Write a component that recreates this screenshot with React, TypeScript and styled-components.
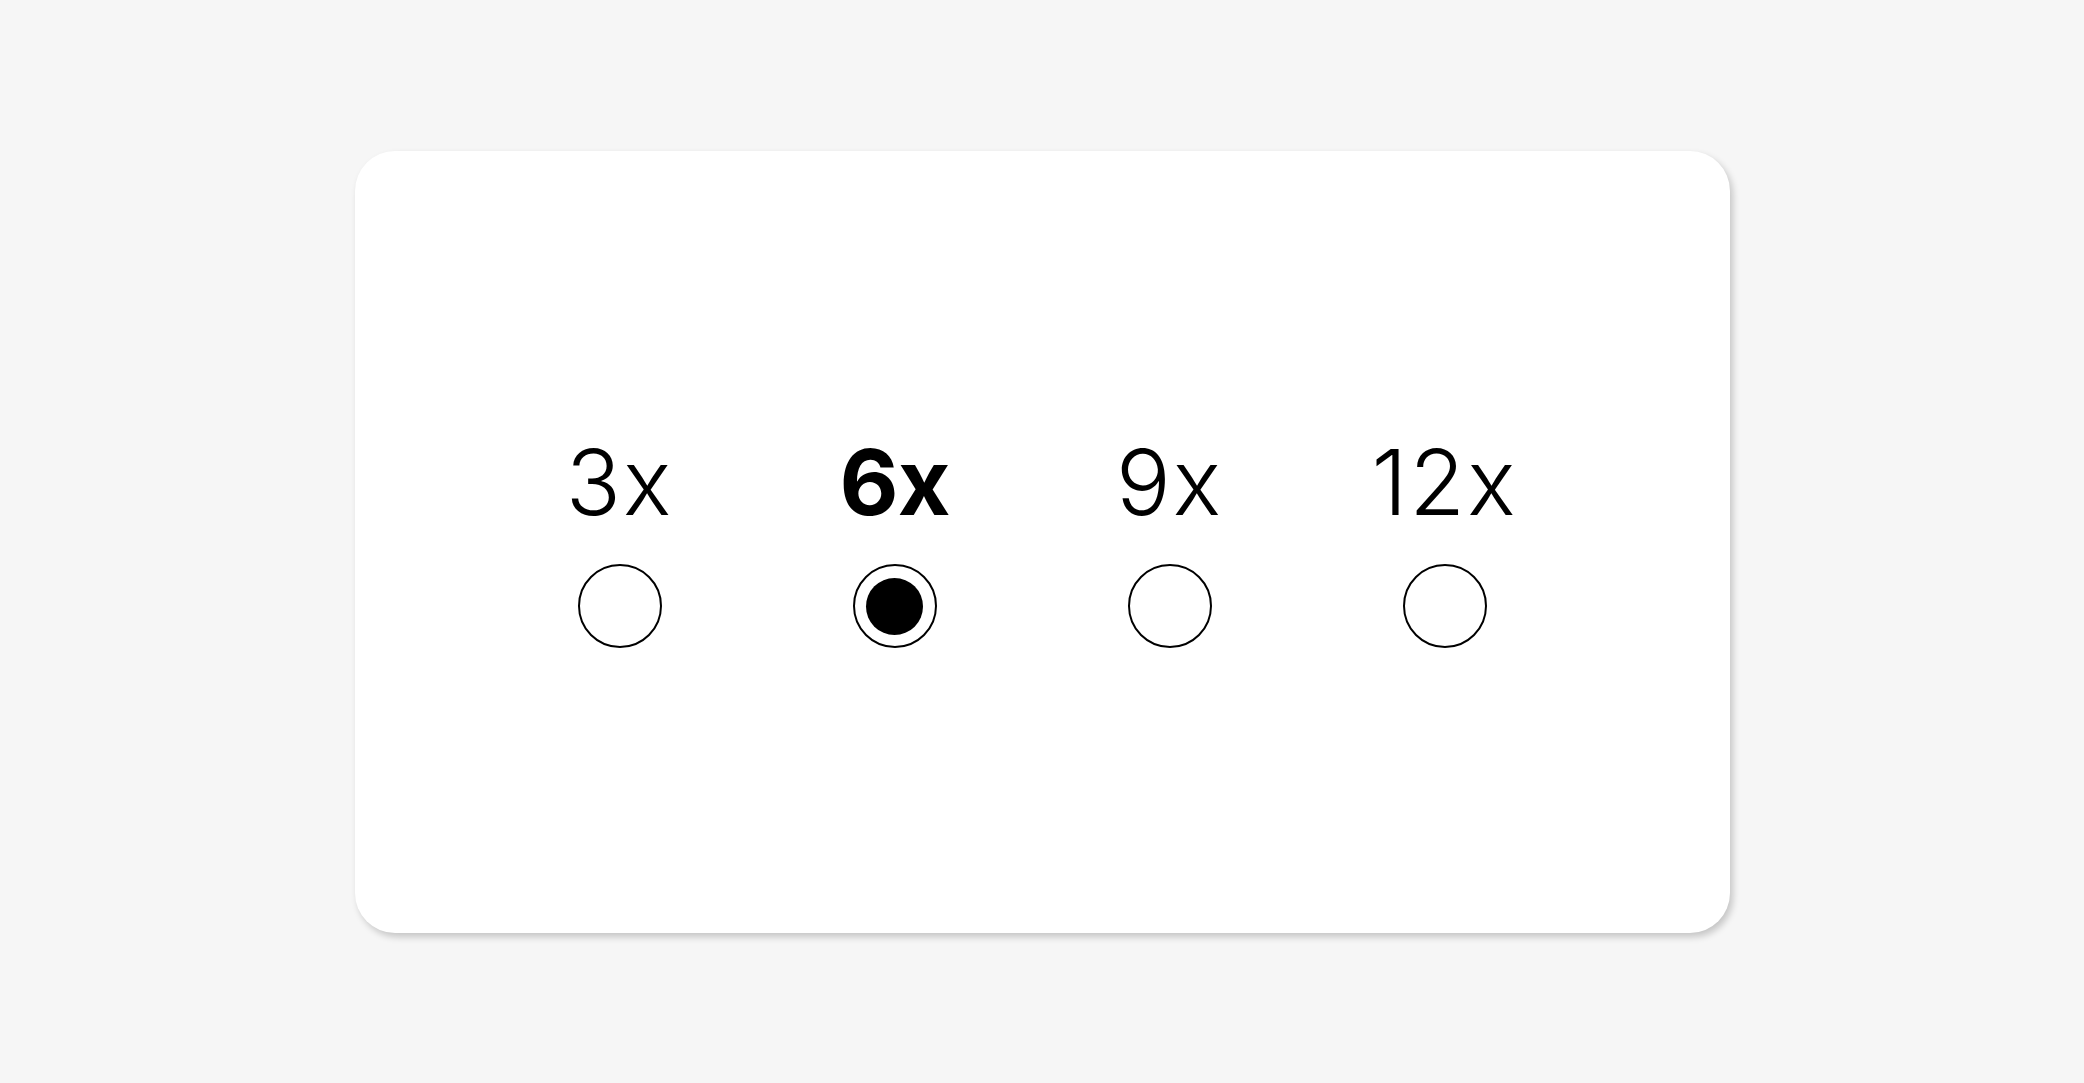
import React, {useState} from 'react';
import styled, {createGlobalStyle} from 'styled-components';

const Global = createGlobalStyle`
  html, body {
    margin: 0;
    padding: 0;
    background: #F6F6F6;
    font-family: Inter, "Noto Sans", sans-serif;
  }
`;

const Page = styled.div`
  height: 100vh;
  display: flex;
  justify-content: center;
  align-items: center;
`;

// 卡片
const Card = styled.div`
  width: 1375px;
  height: 782px;
  background: #FFF;
  border-radius: 40px;
  box-shadow: 3px 4px 7px rgba(0, 0, 0, 0.2);
  display: flex;
  justify-content: center;
  align-items: center;
  padding: 2px 20px 0 0;
  box-sizing: border-box;
`;

const Options = styled.div`
  display: grid;
  grid-template-columns: repeat(4, 275px);
  align-items: start;
`;

const Option = styled.label`
  display: flex;
  flex-direction: column;
  align-items: center;
  gap: 36px;
  cursor: pointer;
`;

const Label = styled.span<{ $active: boolean }>`
  font-size: 91px;
  line-height: 1;
  color: #000;
  letter-spacing: ${p => (p.$active ? '-1px' : '2px')};
  font-weight: ${p => (p.$active ? 650 : 300)};
`;

const Radio = styled.span<{ $active: boolean }>`
  width: 84px;
  height: 84px;
  box-sizing: border-box;
  border: 2px solid #000;
  border-radius: 50%;
  display: flex;
  justify-content: center;
  align-items: center;

  &::after {
    content: '';
    width: 57px;
    height: 57px;
    border-radius: 50%;
    background: #000;
    display: ${p => (p.$active ? 'block' : 'none')};
  }
`;

const Hidden = styled.input`
  display: none;
`;

const speeds = ['3x', '6x', '9x', '12x'];

export default function App() {
    const [speed, setSpeed] = useState('6x');
    return (
        <Page>
            <Global/>
            <Card>
                <Options>
                    {speeds.map(s =>
                        <Option key={s}>
                            <Label $active={s === speed}>{s}</Label>
                            <Hidden type="radio" name="speed" checked={s === speed} onChange={() => setSpeed(s)}/>
                            <Radio $active={s === speed}/>
                        </Option>
                    )}
                </Options>
            </Card>
        </Page>
    );
}
